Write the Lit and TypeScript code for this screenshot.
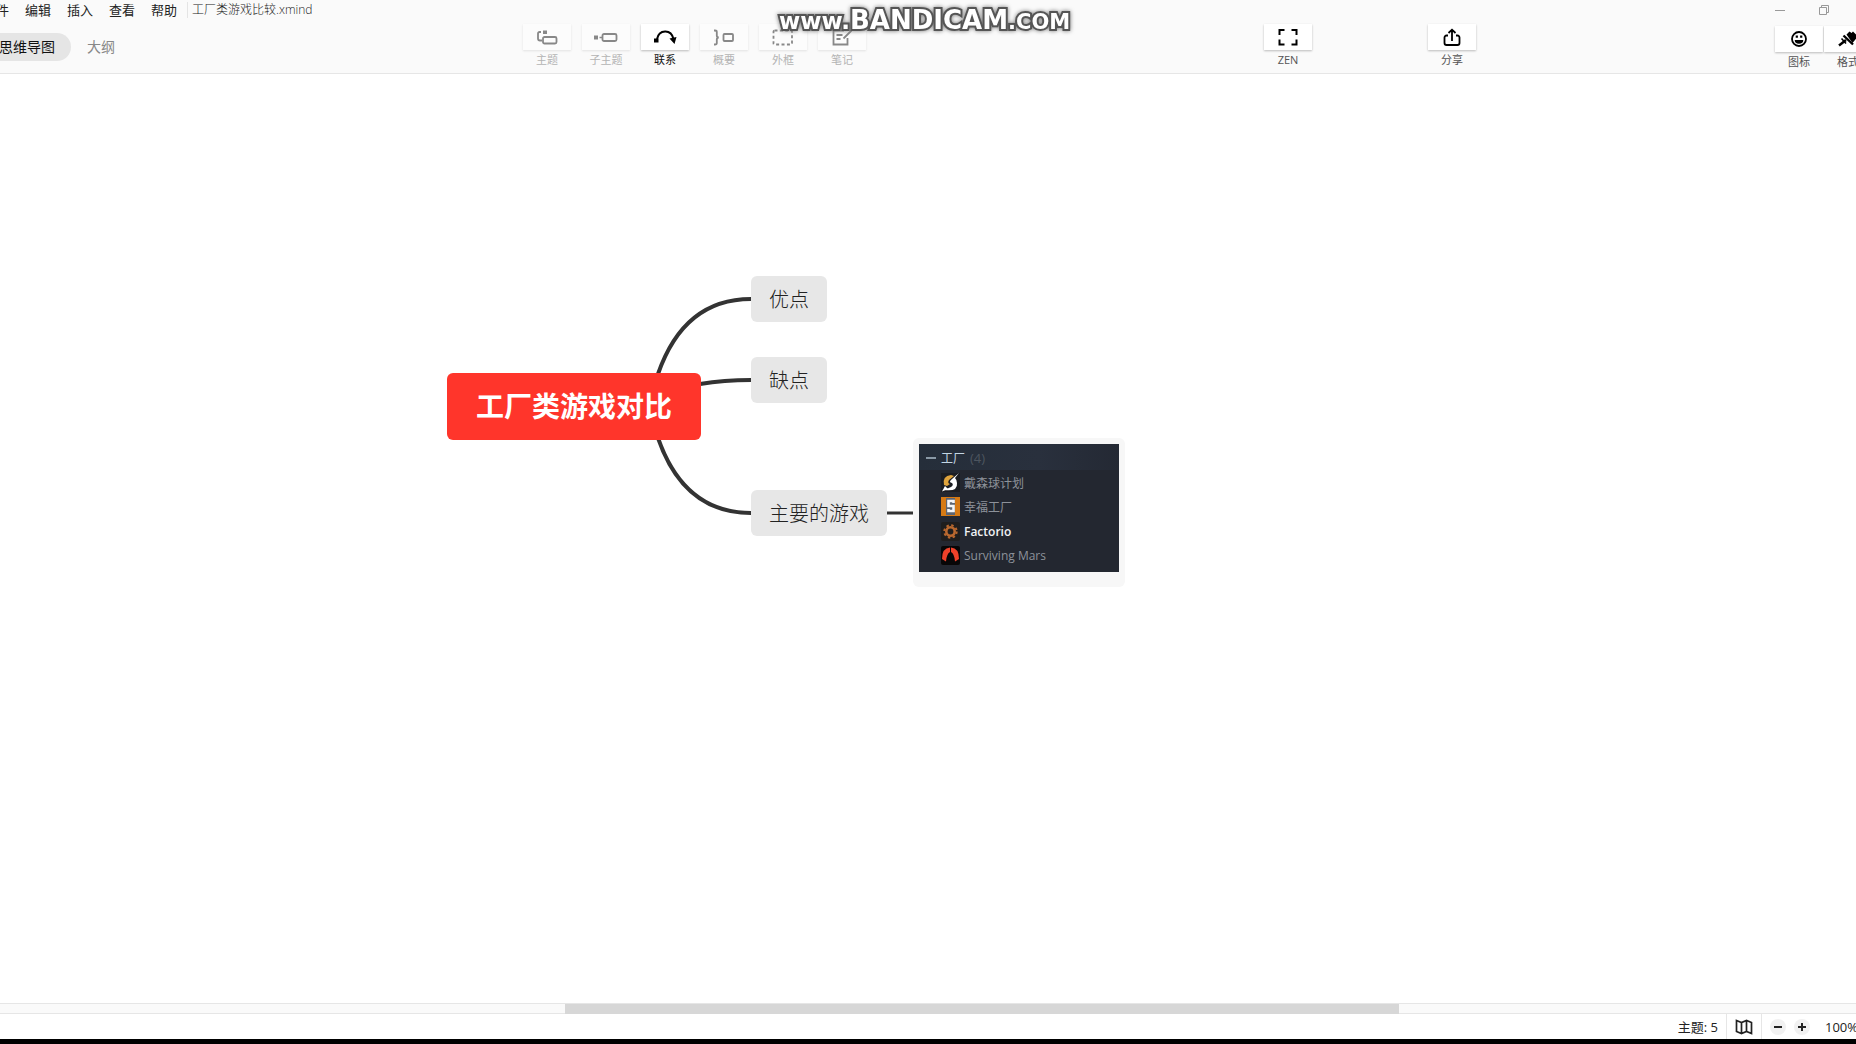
import { LitElement, html, svg, css } from "lit";
import { customElement } from "lit/decorators.js";

const icons: Record<string, unknown> = {
  topic: svg`<path d="M5 3H3.500a1.500 1.500 0 0 0-1.500 1.500V9.500a2 2 0 0 0 2 2H6"/><rect x="7" y="8" width="13.500" height="6.500" rx="1.500"/><path d="M7 1.500h4V5H7z" fill="currentColor" stroke="none"/>`,
  subtopic: svg`<path d="M-1 6.500h4v4h-4zM4.500 7.700h3v1.600h-3z" fill="currentColor" stroke="none"/><rect x="7.500" y="5" width="14" height="7" rx="1.500"/>`,
  relation: svg`<path d="M3 10C5 .5 17-.5 19.500 10" stroke-width="2"/><path d="M0 9.500h4.500v4H0zM15.500 9.500l7-1.500-2 7z" fill="currentColor" stroke="none"/>`,
  summary: svg`<path d="M1 1.500h1Q3.800 1.500 3.800 3V6.500q0 2 2 2-2 0-2 2V14Q3.800 15.500 2 15.500H1"/><rect x="10.500" y="5" width="9.500" height="7" rx="1"/>`,
  boundary: svg`<rect x="1.500" y="1.500" width="18.500" height="14" rx="1" stroke-dasharray="3 2.400"/>`,
  note: svg`<path d="M13 1.500H2.500v14h14V9M5.500 6h6M5.500 10h4M20.500 1.500l-8 8"/>`,
  zen: svg`<path d="M2.500 6V1h5M14.500 1h5v5M19.500 10.500v5h-5M7.500 15.500h-5v-5" stroke-width="2"/>`,
  share: svg`<path d="M7 6.500H5.500a2 2 0 0 0-2 2V14a2 2 0 0 0 2 2h11a2 2 0 0 0 2-2V8.500a2 2 0 0 0-2-2H15M11 12V1M7.500 4L11 .700 14.500 4"/>`,
  smile: svg`<circle cx="11" cy="8" r="7"/><path d="M7.700 4.500h2.200v2.300H7.700zM12.100 4.500h2.200v2.300h-2.200zM6.700 9h8.600a4.300 3.800 0 0 1-8.600 0z" fill="currentColor" stroke="none"/>`,
  brush: svg`<path d="M9.500 3.500l3-3 2 1.500 1.500-1.500 5 5-5.500 6.500z" fill="currentColor" stroke="none"/><path d="M6.500 4.500l9.500 9" stroke-width="2.400"/><path d="M9 9l-7 5.500" stroke-width="2.400"/><path d="M4.500 7.500l4.500 5" stroke-width="1.600"/>`,
};

const glyph = (name: string) =>
  html`<svg class="glyph" viewBox="0 0 22 17" aria-hidden="true">${icons[name]}</svg>`;

const menus = ["文件", "编辑", "插入", "查看", "帮助"];
const tools = [
  { icon: "topic", label: "主题", off: true },
  { icon: "subtopic", label: "子主题", off: true },
  { icon: "relation", label: "联系", off: false },
  { icon: "summary", label: "概要", off: true },
  { icon: "boundary", label: "外框", off: true },
  { icon: "note", label: "笔记", off: true },
];
const games = [
  {
    name: "戴森球计划",
    active: false,
    art: svg`<rect width="19" height="19" fill="#1b1d22"/><path d="M3 12Q1 3 10 2l3 1-5 4q-2 3 1 4l-3 2z" fill="#e0a43c"/><path d="M18 0l-7 6q-4 3 0 4 2 2-1 4l-7 3q14 2 13-7 0-3-2-5z" fill="#fff"/><path d="M1 18.500L4 13l3 3z" fill="#fff"/>`,
  },
  {
    name: "幸福工厂",
    active: false,
    art: svg`<rect width="19" height="19" fill="#d67a14"/><path d="M5 1h9v17H5z" fill="#5d6470"/><path d="M12.500 6V4h-5v5h5v5h-5v-2" fill="none" stroke="#f4f6f8" stroke-width="2.600"/>`,
  },
  {
    name: "Factorio",
    active: true,
    art: svg`<rect width="19" height="19" rx="2" fill="#1f1e1e"/><circle cx="9.500" cy="9.500" r="4.200" fill="none" stroke="#b9682f" stroke-width="2.600"/><circle cx="9.500" cy="9.500" r="6.200" fill="none" stroke="#b9682f" stroke-width="2" stroke-dasharray="2.400 2.470"/>`,
  },
  {
    name: "Surviving Mars",
    active: false,
    art: svg`<rect width="19" height="19" rx="2" fill="#080607"/><path d="M9 1.500Q1 2 1 13l4 2.500Q5.500 8 9 6zM10 1.500Q18 2 18 13l-4 2.500Q13.500 8 10 6z" fill="#f0412a"/>`,
  },
];
const scroll = { start: 30.45, size: 44.95 };

@customElement("app-root")
export class AppRoot extends LitElement {
  static styles = css`
    :host {
      display: flex;
      flex-direction: column;
      height: 100vh;
      overflow: hidden;
      position: relative;
      background: #fff;
      color: #222;
      font-family: "Open Sans", "Noto Sans CJK SC", sans-serif;
      font-size: 13px;
    }
    * { box-sizing: border-box; }
    button {
      border: 0;
      padding: 0;
      background: none;
      color: inherit;
      font: inherit;
      white-space: nowrap;
    }
    header { background: #fafafa; border-bottom: 1px solid #e6e6e6; }
    .menubar { display: flex; align-items: center; height: 20px; overflow: hidden; }
    .menus { display: flex; gap: 16px; margin-left: -17px; }
    .menus button { line-height: 20px; }
    .filename {
      margin-left: 10px;
      padding-left: 4px;
      border-left: 1px solid #e4e4e4;
      font-size: 12px;
      font-weight: 300;
      line-height: 16px;
      color: #222;
    }
    .window { display: flex; gap: 32px; margin-left: auto; padding-right: 26px; color: #999; }
    .window svg { display: block; width: 12px; height: 12px; fill: none; stroke: currentColor; }
    .toolbar {
      display: grid;
      grid-template-columns: 523fr 343px 398fr 48px 116fr 48px 299fr 81px;
      height: 53px;
      align-items: start;
      padding-top: 4px;
      overflow: hidden;
    }
    .views { display: flex; align-items: center; gap: 16px; margin-top: 9px; }
    .views button { height: 28px; line-height: 28px; font-size: 14px; color: #888; }
    .views .on {
      margin-left: -17px;
      padding: 0 16px;
      border-radius: 14px;
      background: #e5e5e5;
      color: #111;
    }
    .tools { display: flex; gap: 11px; }
    .tool { display: flex; flex-direction: column; align-items: center; width: 48px; font-size: 11px; color: #555; }
    .face {
      display: flex;
      align-items: center;
      justify-content: center;
      width: 48px;
      height: 26px;
      background: #fff;
      box-shadow: 0 1px 2px #bbb;
      color: #000;
    }
    .name { line-height: 16px; margin-top: 2px; }
    .tool.live { color: #111; }
    .tool:disabled { color: #b4b4b4; }
    .tool:disabled .face { background: #fcfcfc; color: #888; box-shadow: 0 1px 2px #e2e2e2; }
    .glyph {
      width: 22px;
      height: 17px;
      fill: none;
      stroke: currentColor;
      stroke-width: 1.8;
      overflow: visible;
    }
    .panels { display: flex; gap: 1px; margin-top: 2px; }
    .panels .tool { flex: none; }
    .watermark {
      position: absolute;
      left: 779px;
      top: 5px;
      display: flex;
      align-items: baseline;
      font: bold 26px/30px "DejaVu Sans", sans-serif;
      color: #fff;
      -webkit-text-stroke: 4px #555;
      paint-order: stroke fill;
      filter: drop-shadow(0 0 2px #777);
      pointer-events: none;
    }
    .watermark .www { font-size: 23px; }
    .watermark .com { font-size: 21px; }
    main { position: relative; flex: 1; min-height: 0; overflow: hidden; }
    .links { position: absolute; left: 0; top: 0; width: 1200px; height: 600px; fill: none; stroke: #333; stroke-width: 4; }
    .node {
      position: absolute;
      left: 751px;
      padding: 2px 18px 0;
      border-radius: 6px;
      background: #e7e7e7;
      font-size: 20px;
      font-weight: 300;
      line-height: 44px;
      color: #222;
      white-space: nowrap;
    }
    .pros { top: 202px; }
    .cons { top: 283px; }
    .list { top: 416px; }
    .root {
      left: 447px;
      top: 299px;
      padding: 0 29px;
      background: #ff352b;
      color: #fff;
      font-size: 28px;
      font-weight: 700;
      line-height: 67px;
    }
    .card { position: absolute; left: 913px; top: 364px; padding: 6px 6px 15px; border-radius: 6px; background: #f7f7f7; }
    .library { width: 200px; padding-bottom: 4px; background: #232730; color: #8d929a; font-size: 12px; }
    .group {
      display: flex;
      align-items: center;
      gap: 5px;
      height: 26px;
      padding: 2px 0 0 7px;
      background: linear-gradient(90deg, #252e3a, #29303d 60%, #242934);
      color: #c3d6e4;
    }
    .dash { width: 10px; height: 2px; background: #8a99a6; }
    .count { color: #4d555f; font-size: 13px; }
    .games { margin: 0; padding: 0 0 0 22px; list-style: none; }
    .games li { display: flex; align-items: center; gap: 4px; height: 25px; margin-bottom: -1px; }
    .games li:nth-child(even) { margin-bottom: 0; }
    .games svg { width: 19px; height: 19px; }
    .games .active { color: #f0f2f4; font-weight: 600; }
    .track { height: 11px; background: #fafafa; border: solid #e6e6e6; border-width: 1px 0; }
    .thumb { height: 10px; background: #d7d7d7; }
    footer {
      display: flex;
      justify-content: flex-end;
      align-items: center;
      height: 30px;
      border-bottom: 5px solid #000;
      overflow: hidden;
      line-height: 24px;
    }
    .topics { padding-right: 8px; }
    .map { display: flex; align-items: center; justify-content: center; width: 36px; height: 25px; border: solid #e6e6e6; border-width: 0 1px; }
    .map svg { width: 18px; height: 16px; fill: none; stroke: #222; stroke-width: 1.7; }
    .zoom { display: flex; align-items: center; gap: 8px; padding-left: 8px; width: 94px; }
    .zoom button { flex: none; width: 16px; height: 16px; border-radius: 8px; background: #f1f1f1; }
    .zoom svg { display: block; width: 16px; height: 16px; stroke: #222; stroke-width: 2; }
    .percent { margin-left: 7px; }
  `;

  private tool(icon: string, label: string, off = false, live = false) {
    return html`<button class="tool ${live ? "live" : ""}" ?disabled=${off}>
      <span class="face">${glyph(icon)}</span><span class="name">${label}</span>
    </button>`;
  }

  render() {
    return html`
      <header>
        <div class="menubar">
          <nav class="menus">${menus.map((m) => html`<button>${m}</button>`)}</nav>
          <span class="filename">工厂类游戏比较.xmind</span>
          <div class="window">
            <button aria-label="最小化"><svg viewBox="0 0 12 12"><path d="M1 6.500h10" /></svg></button>
            <button aria-label="还原"><svg viewBox="0 0 12 12"><path d="M1.500 3.500h7v7h-7zM3.500 3V1.500h7v7H9" /></svg></button>
          </div>
        </div>
        <div class="toolbar">
          <div class="views">
            <button class="on">思维导图</button>
            <button>大纲</button>
          </div>
          <div class="tools">${tools.map((t) => this.tool(t.icon, t.label, t.off, !t.off))}</div>
          <span></span>
          ${this.tool("zen", "ZEN")}
          <span></span>
          ${this.tool("share", "分享")}
          <span></span>
          <div class="panels">${this.tool("smile", "图标")}${this.tool("brush", "格式")}</div>
        </div>
      </header>
      <main>
        <svg class="links" viewBox="0 0 1200 600" aria-hidden="true">
          <path d="M658 300Q684 225 751 225" />
          <path d="M700 310Q724 306 751 306" />
          <path d="M658 364Q684 439 751 439" />
          <path d="M886 439h27" stroke-width="3" />
        </svg>
        <div class="node root">工厂类游戏对比</div>
        <div class="node pros">优点</div>
        <div class="node cons">缺点</div>
        <div class="node list">主要的游戏</div>
        <div class="card">
          <div class="library">
            <div class="group"><span class="dash"></span><span>工厂</span><span class="count">(4)</span></div>
            <ul class="games">
              ${games.map(
                (g) => html`<li class=${g.active ? "active" : ""}>
                  <svg viewBox="0 0 19 19" aria-hidden="true">${g.art}</svg><span>${g.name}</span>
                </li>`
              )}
            </ul>
          </div>
        </div>
      </main>
      <div class="track">
        <div class="thumb" style="margin-left:${scroll.start}%;width:${scroll.size}%"></div>
      </div>
      <footer>
        <span class="topics">主题: 5</span>
        <button class="map" aria-label="导航图">
          <svg viewBox="0 0 18 16"><path d="M1.500 1.500l5 2 5-2 5 2v11l-5-2-5 2-5-2zM6.500 3.500v11M11.500 1.500v11" /></svg>
        </button>
        <div class="zoom">
          <button aria-label="缩小"><svg viewBox="0 0 16 16"><path d="M4 8h8" /></svg></button>
          <button aria-label="放大"><svg viewBox="0 0 16 16"><path d="M4 8h8M8 4v8" /></svg></button>
          <span class="percent">100%</span>
        </div>
      </footer>
      <div class="watermark"><span class="www">www.</span><span>BANDICAM</span><span class="com">.COM</span></div>
    `;
  }
}
